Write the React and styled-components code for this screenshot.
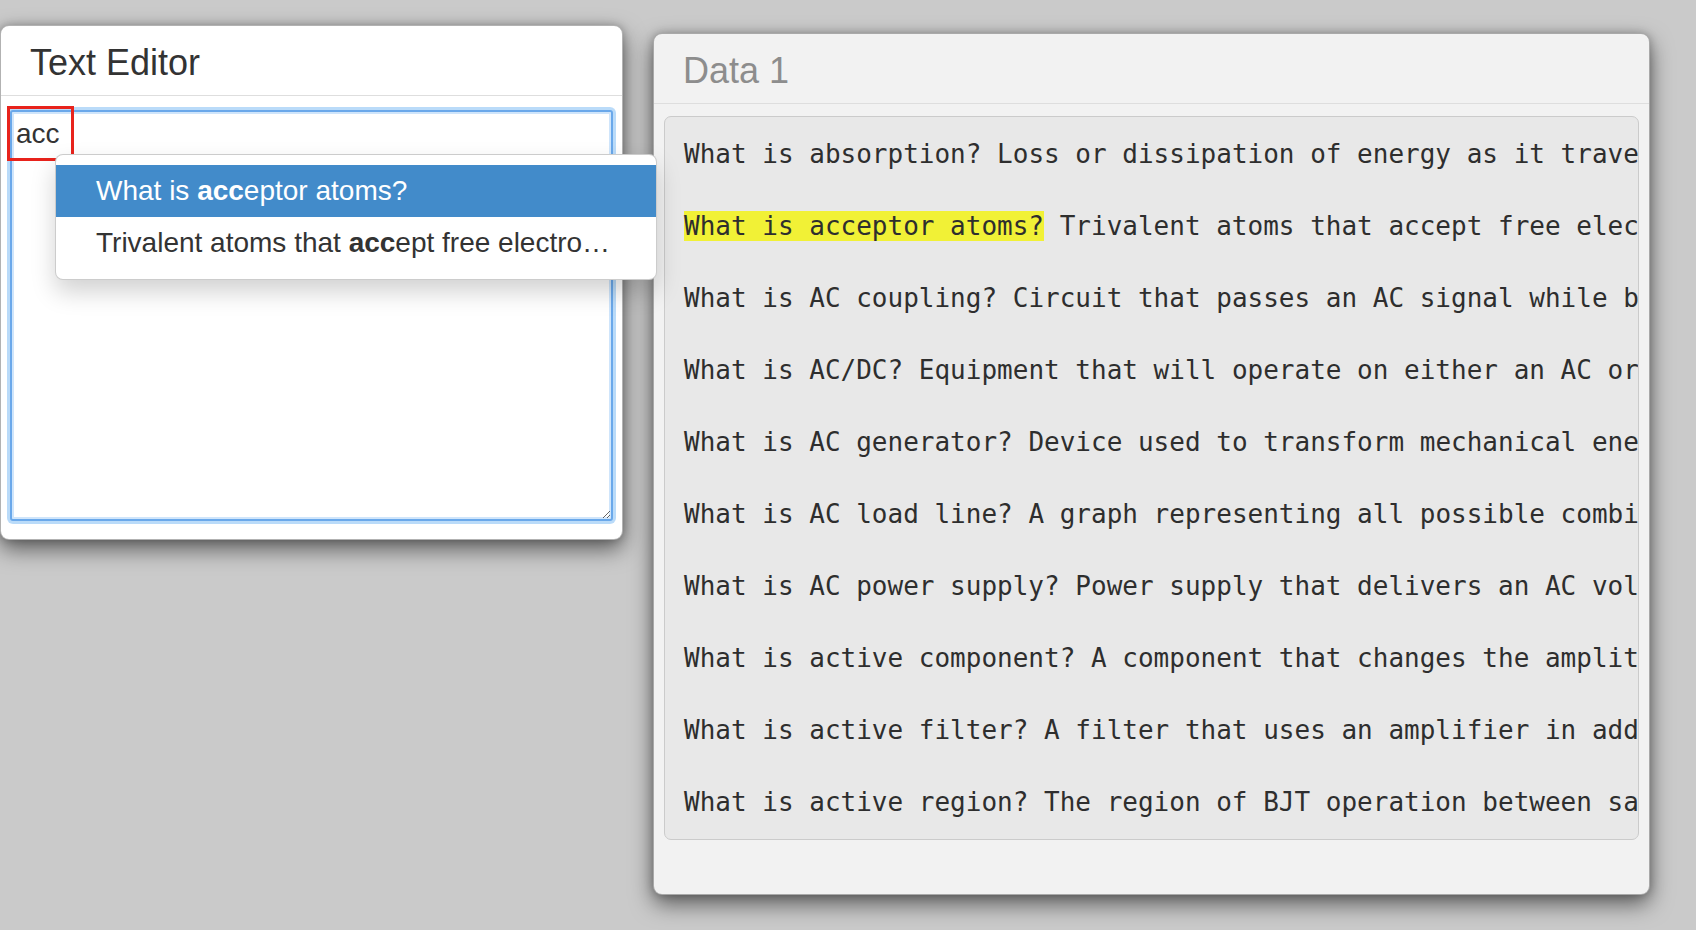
import React from "react";
import styled, { createGlobalStyle } from "styled-components";

const GlobalStyle = createGlobalStyle`
  html, body {
    margin: 0;
    padding: 0;
    background: #cacaca;
    font-family: "Liberation Sans", Arial, sans-serif;
  }
`;

const Desk = styled.div`
  display: flex;
  align-items: flex-start;
  gap: 30px;
  min-height: 930px;
`;

const Panel = styled.section`
  position: relative;
  z-index: ${({ $front }) => ($front ? 2 : 1)};
  width: ${({ $width }) => $width}px;
  margin-top: ${({ $top }) => $top}px;
  box-sizing: border-box;
  background: ${({ $bg }) => $bg};
  border: 1px solid rgba(0, 0, 0, 0.3);
  border-radius: 9px;
  box-shadow: 0 9px 22px rgba(0, 0, 0, 0.55), 0 0 8px rgba(0, 0, 0, 0.22);
`;

const Header = styled.header`
  height: ${({ $height }) => $height}px;
  padding: 0 29px;
  border-bottom: 1px solid #dedede;
  font-size: 36px;
  line-height: 74px;
  color: ${({ $muted }) => ($muted ? "#8d8d8d" : "#333")};
  white-space: nowrap;
`;

const EditorBody = styled.div`
  padding: 14px 9px 18px;
`;

const Editor = styled.textarea`
  display: block;
  box-sizing: border-box;
  width: 100%;
  height: 411px;
  margin: 0;
  padding: 2px 4px;
  border: 2px solid #6aa8ea;
  border-radius: 3px;
  outline: none;
  background: #fff;
  color: #333;
  font-family: "Liberation Sans", Arial, sans-serif;
  font-size: 28px;
  line-height: 40px;
  box-shadow: 0 0 0 3px rgba(140, 195, 245, 0.6), inset 0 0 0 2px #cfe5fb;
  resize: both;
`;

const Marker = styled.div`
  position: absolute;
  left: 6px;
  top: 80px;
  width: 67px;
  height: 55px;
  box-sizing: border-box;
  border: 3px solid #e8231c;
  pointer-events: none;
`;

const Menu = styled.ul`
  position: absolute;
  left: 54px;
  top: 128px;
  width: 602px;
  box-sizing: border-box;
  margin: 0;
  padding: 10px 0;
  list-style: none;
  background: #fff;
  border: 1px solid rgba(0, 0, 0, 0.2);
  border-radius: 8px;
  box-shadow: 0 12px 24px rgba(0, 0, 0, 0.18);
`;

const MenuItem = styled.li`
  padding: 6px 40px;
  font-size: 28px;
  line-height: 40px;
  white-space: nowrap;
  overflow: hidden;
  text-overflow: ellipsis;
  color: ${({ $active }) => ($active ? "#fff" : "#333")};
  background: ${({ $active }) => ($active ? "#428bca" : "transparent")};

  b {
    font-weight: 700;
  }
`;

const DataBody = styled.div`
  padding: 12px 10px 54px;
`;

const DataBox = styled.div`
  height: 724px;
  box-sizing: border-box;
  padding: 1px 0 1px 19px;
  overflow: hidden;
  background: #e8e8e8;
  border: 1px solid #cbcbcb;
  border-radius: 7px;
`;

const DataRow = styled.div`
  height: 72px;
  font-family: "DejaVu Sans Mono", "Liberation Mono", monospace;
  font-size: 26px;
  line-height: 72px;
  color: #2e2e2e;
  white-space: nowrap;
`;

const Hit = styled.span`
  background: #f1f136;
`;

const rows = [
  ["What is absorption?", "Loss or dissipation of energy as it travels through a medium."],
  ["What is acceptor atoms?", "Trivalent atoms that accept free electrons in a semiconductor.", true],
  ["What is AC coupling?", "Circuit that passes an AC signal while blocking a DC voltage."],
  ["What is AC/DC?", "Equipment that will operate on either an AC or DC power source."],
  ["What is AC generator?", "Device used to transform mechanical energy into AC electrical energy."],
  ["What is AC load line?", "A graph representing all possible combinations of current and voltage."],
  ["What is AC power supply?", "Power supply that delivers an AC voltage to its load."],
  ["What is active component?", "A component that changes the amplitude of a signal."],
  ["What is active filter?", "A filter that uses an amplifier in addition to reactive components."],
  ["What is active region?", "The region of BJT operation between saturation and cutoff."],
];

export default function App() {
  return (
    <>
      <GlobalStyle />
      <Desk>
        <Panel $front $width={623} $top={25} $bg="#fff">
          <Header $height={69}>Text Editor</Header>
          <EditorBody>
            <Editor value="acc" readOnly spellCheck={false} />
          </EditorBody>
          <Marker />
          <Menu>
            <MenuItem $active>
              What is <b>acc</b>eptor atoms?
            </MenuItem>
            <MenuItem>
              Trivalent atoms that <b>acc</b>ept free electro…
            </MenuItem>
          </Menu>
        </Panel>

        <Panel $width={997} $top={33} $bg="#f2f2f2">
          <Header $height={69} $muted>
            Data 1
          </Header>
          <DataBody>
            <DataBox>
              {rows.map(([q, a, hit]) => (
                <DataRow key={q}>
                  {hit ? <Hit>{q}</Hit> : q} {a}
                </DataRow>
              ))}
            </DataBox>
          </DataBody>
        </Panel>
      </Desk>
    </>
  );
}
